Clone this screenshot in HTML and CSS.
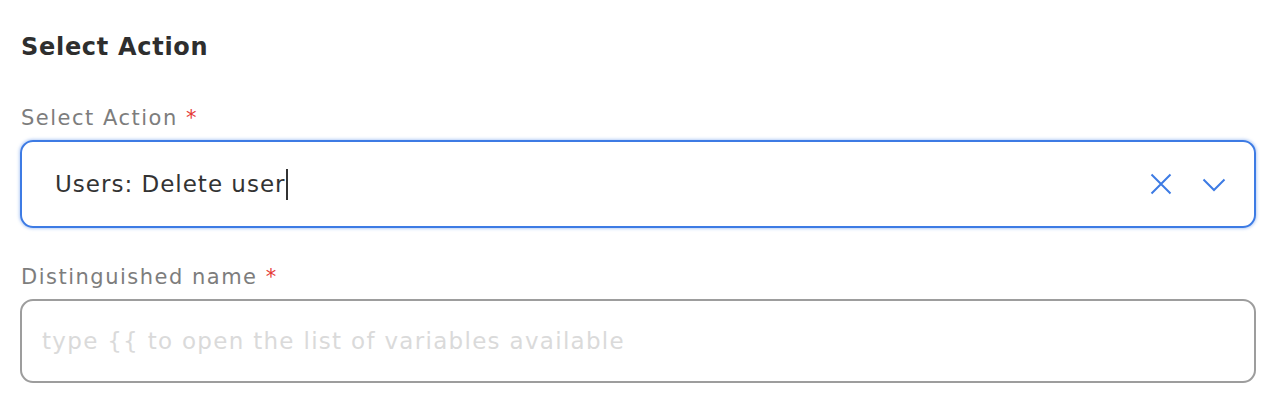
FILE: index.html
```html
<!DOCTYPE html>
<html>
<head>
<meta charset="utf-8">
<link rel="stylesheet" href="styles.css">
</head>
<body>
<div class="panel">
  <h2 class="title">Select Action</h2>
  <div class="field">
    <label class="label">Select Action <span class="req">*</span></label>
    <div class="select focused">
      <span class="value">Users: Delete user</span><span class="caret"></span>
      <div class="icons">
        <svg class="ico-x" width="22" height="22" viewBox="0 0 22 22"><path d="M1.5 1.5 L20.5 20.5 M20.5 1.5 L1.5 20.5" stroke="#3d7be4" stroke-width="2" fill="none"/></svg>
        <svg class="ico-chev" width="24" height="14" viewBox="0 0 24 14"><path d="M1.5 1.5 L12 12 L22.5 1.5" stroke="#3d7be4" stroke-width="2" fill="none"/></svg>
      </div>
    </div>
  </div>
  <div class="field second">
    <label class="label">Distinguished name <span class="req">*</span></label>
    <div class="textbox">
      <span class="placeholder">type {{ to open the list of variables available</span>
    </div>
  </div>
</div>
</body>
</html>
```
FILE: styles.css
```css
html, body { margin: 0; padding: 0; background: #fff; }
body { font-family: "DejaVu Sans", sans-serif; }
.panel { padding: 31px 20px 0 20px; }
.title { margin: 0; font-size: 24px; font-weight: 700; letter-spacing: 0.7px; color: #2e2e2e; line-height: 32px; height: 32px; padding-left: 1px; }
.field { margin-top: 41px; }
.field.second { margin-top: 35px; }
.label { display: block; font-size: 21px; letter-spacing: 1.5px; color: #7d7d7d; line-height: 28px; height: 28px; padding-left: 1px; margin-bottom: 8px; }
.req { color: #e53935; letter-spacing: 0; }
.select { box-sizing: border-box; height: 88px; border: 2px solid #3d7be4; border-radius: 13px; box-shadow: 0 0 3px 1px rgba(61,123,228,0.35); display: flex; align-items: center; padding-left: 33px; padding-right: 28px; }
.value { font-size: 23px; letter-spacing: 1px; color: #333; }
.caret { display: inline-block; width: 2px; height: 31px; background: #333; margin-left: 0; }
.icons { margin-left: auto; display: flex; align-items: center; gap: 30px; }
.ico-x { display: block; }
.ico-chev { display: block; margin-top: 2px; }
.textbox { box-sizing: border-box; height: 84px; border: 2px solid #9d9d9d; border-radius: 13px; display: flex; align-items: center; padding-left: 20px; }
.placeholder { font-size: 23px; letter-spacing: 1.3px; color: #dadada; }
```
